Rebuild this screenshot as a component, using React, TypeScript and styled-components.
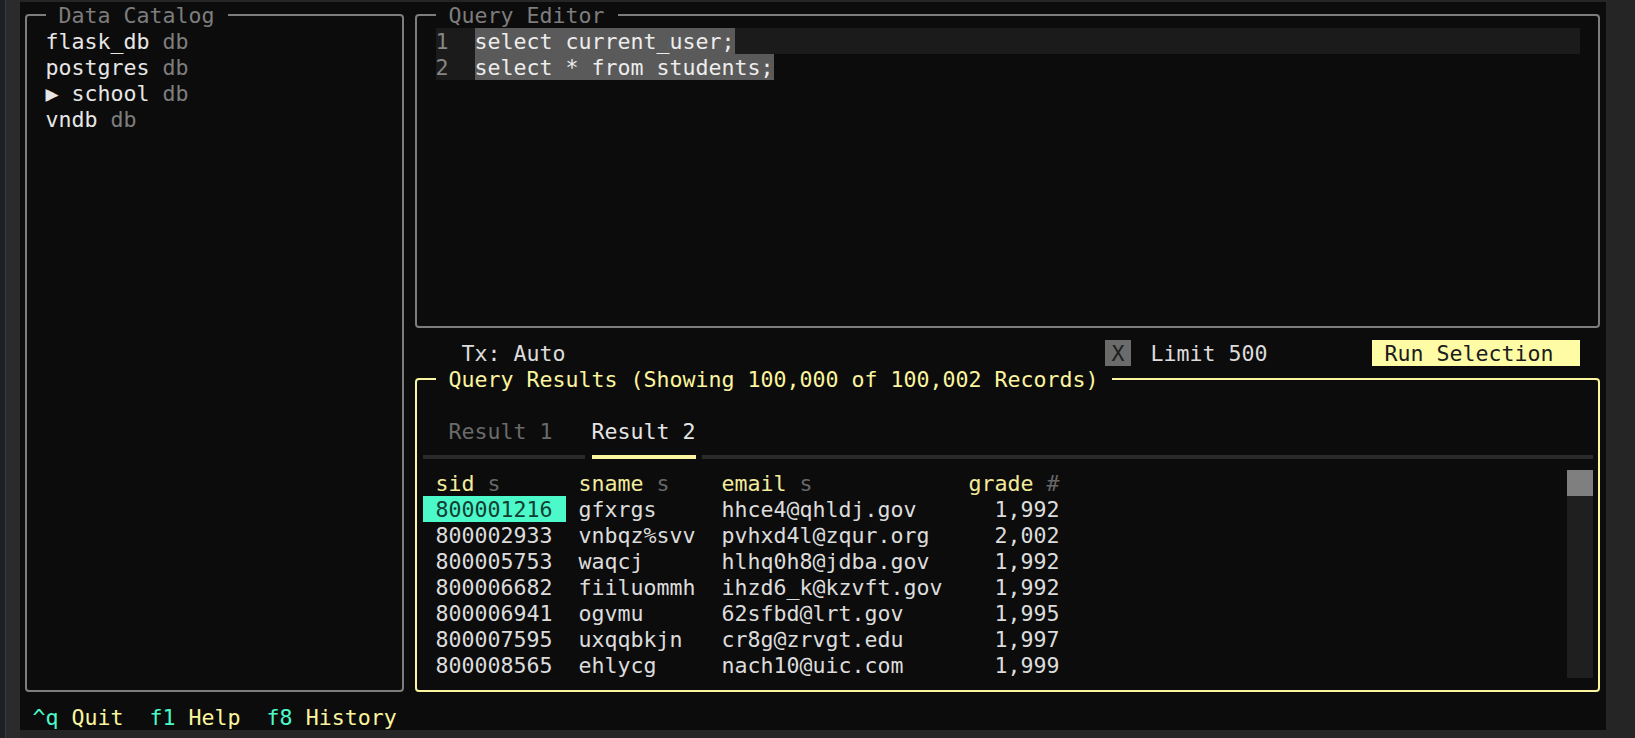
import React from "react";
import styled, { createGlobalStyle } from "styled-components";

const CELL = 13;
const ROW = 26;
const LINE = 28; /* line box a little taller than the row: drops glyphs 1px like the terminal */
const YELLOW = "#fbf59f";
const CYAN = "#4cf9c9";
const MUTED = "#7d7d7d";
const TERM_BG = "#0c0c0c";

const Global = createGlobalStyle`
  html, body { margin: 0; padding: 0; background: #252525; }
  body { font-family: "DejaVu Sans Mono", "Liberation Mono", monospace; }
  #root { width: 1635px; height: 738px; overflow: hidden; }
`;

const Screen = styled.div`
  display: flex;
  width: 1635px;
  height: 738px;
  background: #252525;
`;

const SideStrip = styled.div`
  flex: none;
  width: 19.5px;
  background: linear-gradient(to right, #1d2026 0 5px, #3a3b3f 5px 6px, #2b2b2e 6px 100%);
`;

const Terminal = styled.main`
  flex: none;
  margin-top: 2px;
  width: ${122 * CELL}px;
  height: ${28 * ROW}px;
  background: ${TERM_BG};
  display: grid;
  grid-template-columns: repeat(122, ${CELL}px);
  grid-template-rows: repeat(28, ${ROW}px);
  font-family: "DejaVu Sans Mono", "Liberation Mono", monospace;
  font-size: 21.6px;
  line-height: ${LINE}px;
  color: #e2e2e2;
  white-space: pre;
`;

const Panel = styled.section<{ $area: string; $focus?: boolean }>`
  grid-area: ${(p) => p.$area};
  position: relative;
  margin: 12px 5.5px;
  border: 2px solid ${(p) => (p.$focus ? YELLOW : MUTED)};
  border-radius: 4px;
  padding: 12px 5.5px;
  display: flex;
  flex-direction: column;
  min-width: 0;
  min-height: 0;
`;

const PanelTitle = styled.h2<{ $focus?: boolean }>`
  position: absolute;
  top: -14px;
  left: 18.5px;
  margin: 0;
  height: ${ROW}px;
  overflow: hidden;
  font: inherit;
  background: ${TERM_BG};
  color: ${(p) => (p.$focus ? YELLOW : MUTED)};
`;

/* Data catalog */
const Tree = styled.ul`
  list-style: none;
  margin: 0;
  padding: 0 0 0 ${CELL}px;
`;

const TreeItem = styled.li`
  height: ${ROW}px;
  color: #e6e6e6;
`;

const TypeHint = styled.span`
  color: ${MUTED};
`;

/* Editor */
const Editor = styled.div`
  display: flex;
  flex-direction: column;
  padding: 0 ${CELL}px;
`;

const EditorLine = styled.div<{ $current?: boolean }>`
  display: flex;
  height: ${ROW}px;
  background: ${(p) => (p.$current ? "#1b1b1b" : "transparent")};
`;

const Gutter = styled.span`
  flex: none;
  width: ${3 * CELL}px;
  height: ${ROW}px;
  background: #1b1b1b;
  color: #868686;
`;

const Selected = styled.span`
  height: ${ROW}px;
  background: #5a5a5a;
  color: #ededed;
`;

/* Toolbar */
const Toolbar = styled.div`
  grid-area: 14 / 32 / 15 / 122;
  display: flex;
  align-items: stretch;
  color: #dcdcdc;
`;

const TxLabel = styled.span`
  margin-left: ${3 * CELL}px;
`;

const CheckBox = styled.span`
  margin-left: auto;
  width: ${2 * CELL}px;
  display: flex;
  justify-content: center;
  background: #6b6b6b;
  color: #1e1e1e;
`;

const LimitLabel = styled.span`
  margin-left: 19.5px;
`;

const RunButton = styled.button`
  margin: 0 ${CELL}px 0 ${8 * CELL}px;
  width: ${16 * CELL}px;
  height: ${ROW}px;
  padding: 0 0 0 ${CELL}px;
  border: none;
  border-radius: 0;
  text-align: left;
  font: inherit;
  line-height: ${LINE}px;
  background: #fefda6;
  color: #1c1c1c;
  overflow: hidden;
`;

/* Results */
const BlankRow = styled.div`
  height: ${ROW}px;
`;

const TabRow = styled.div`
  display: flex;
  gap: ${CELL}px;
  height: ${ROW}px;
  padding-left: ${CELL}px;
`;

const Tab = styled.span<{ $active?: boolean }>`
  padding: 0 ${CELL}px;
  color: ${(p) => (p.$active ? "#e4e4e4" : "#6a6a6a")};
`;

const Rule = styled.div`
  display: flex;
  align-items: center;
  gap: 6.5px;
  height: ${ROW}px;
`;

const RuleSegment = styled.span<{ $active?: boolean; $w?: number }>`
  height: 4px;
  flex: ${(p) => (p.$w ? `0 0 ${p.$w}px` : "1 1 auto")};
  background: ${(p) => (p.$active ? YELLOW : "#2a2a2a")};
`;

const TableArea = styled.div`
  display: flex;
  height: ${8 * ROW}px;
`;

const Table = styled.div`
  flex: 1;
  display: grid;
  grid-template-columns: ${11 * CELL}px ${11 * CELL}px ${19 * CELL}px ${9 * CELL}px;
  grid-auto-rows: ${ROW}px;
  align-content: start;
`;

const Cell = styled.span<{ $num?: boolean; $cursor?: boolean }>`
  padding: 0 ${CELL}px;
  text-align: ${(p) => (p.$num ? "right" : "left")};
  background: ${(p) => (p.$cursor ? CYAN : "transparent")};
  color: ${(p) => (p.$cursor ? "#123d32" : "#dcdcdc")};
`;

const HeadCell = styled.span<{ $num?: boolean }>`
  padding: 0 ${CELL}px;
  text-align: ${(p) => (p.$num ? "right" : "left")};
  color: #f3eb9b;
`;

const HeadType = styled.span`
  color: #676767;
`;

const ScrollTrack = styled.div`
  flex: none;
  width: ${2 * CELL}px;
  background: #1f1f1f;
  display: flex;
  flex-direction: column;
`;

const ScrollThumb = styled.div`
  height: ${ROW}px;
  background: #7f7f7f;
`;

/* Footer */
const Footer = styled.footer`
  grid-area: 28 / 1 / 29 / 123;
  padding-left: ${CELL}px;
  display: flex;
  gap: ${2 * CELL}px;
`;

const Binding = styled.span`
  color: ${YELLOW};
`;

const Key = styled.span`
  color: ${CYAN};
`;

const catalog = [
  { name: "flask_db" },
  { name: "postgres" },
  { name: "school", expandable: true },
  { name: "vndb" },
];

const columns = [
  { name: "sid", type: "s" },
  { name: "sname", type: "s" },
  { name: "email", type: "s" },
  { name: "grade", type: "#", num: true },
];

const rows = [
  ["800001216", "gfxrgs", "hhce4@qhldj.gov", "1,992"],
  ["800002933", "vnbqz%svv", "pvhxd4l@zqur.org", "2,002"],
  ["800005753", "waqcj", "hlhq0h8@jdba.gov", "1,992"],
  ["800006682", "fiiluommh", "ihzd6_k@kzvft.gov", "1,992"],
  ["800006941", "ogvmu", "62sfbd@lrt.gov", "1,995"],
  ["800007595", "uxqqbkjn", "cr8g@zrvgt.edu", "1,997"],
  ["800008565", "ehlycg", "nach10@uic.com", "1,999"],
];

const bindings = [
  { key: "^q", label: "Quit" },
  { key: "f1", label: "Help" },
  { key: "f8", label: "History" },
];

export default function App() {
  return (
    <>
      <Global />
      <Screen>
        <SideStrip />
        <Terminal>
          <Panel $area="1 / 1 / 28 / 31">
            <PanelTitle> Data Catalog </PanelTitle>
            <Tree>
              {catalog.map((c) => (
                <TreeItem key={c.name}>
                  {c.expandable ? "▶ " : ""}
                  {c.name}
                  <TypeHint> db</TypeHint>
                </TreeItem>
              ))}
            </Tree>
          </Panel>

          <Panel $area="1 / 31 / 14 / 123">
            <PanelTitle> Query Editor </PanelTitle>
            <Editor>
              <EditorLine $current>
                <Gutter>1</Gutter>
                <Selected>select current_user;</Selected>
              </EditorLine>
              <EditorLine>
                <Gutter>2</Gutter>
                <Selected>select * from students;</Selected>
              </EditorLine>
            </Editor>
          </Panel>

          <Toolbar>
            <TxLabel>Tx: Auto</TxLabel>
            <CheckBox>X</CheckBox>
            <LimitLabel>Limit 500</LimitLabel>
            <RunButton type="button">Run Selection</RunButton>
          </Toolbar>

          <Panel $area="15 / 31 / 28 / 123" $focus>
            <PanelTitle $focus> Query Results (Showing 100,000 of 100,002 Records) </PanelTitle>
            <BlankRow />
            <TabRow>
              <Tab>Result 1</Tab>
              <Tab $active>Result 2</Tab>
            </TabRow>
            <Rule>
              <RuleSegment $w={12.5 * CELL} />
              <RuleSegment $active $w={8 * CELL} />
              <RuleSegment />
            </Rule>
            <TableArea>
              <Table>
                {columns.map((c) => (
                  <HeadCell key={c.name} $num={c.num}>
                    {c.name}
                    <HeadType> {c.type}</HeadType>
                  </HeadCell>
                ))}
                {rows.map((r, ri) =>
                  r.map((v, ci) => (
                    <Cell key={`${ri}-${ci}`} $num={ci === 3} $cursor={ri === 0 && ci === 0}>
                      {v}
                    </Cell>
                  ))
                )}
              </Table>
              <ScrollTrack>
                <ScrollThumb />
              </ScrollTrack>
            </TableArea>
          </Panel>

          <Footer>
            {bindings.map((b) => (
              <Binding key={b.key}>
                <Key>{b.key}</Key> {b.label}
              </Binding>
            ))}
          </Footer>
        </Terminal>
      </Screen>
    </>
  );
}
